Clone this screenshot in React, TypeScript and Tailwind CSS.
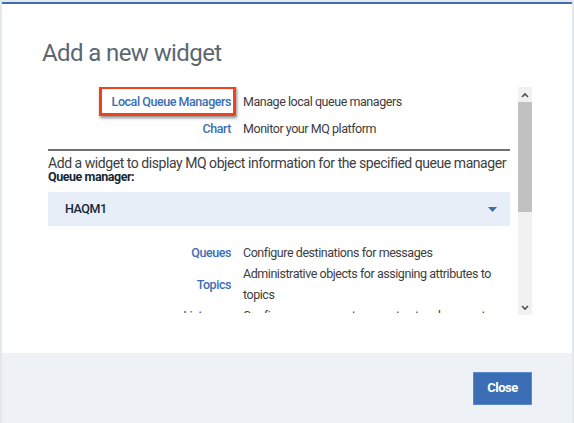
import React from 'react';

const font = { fontFamily: 'Roboto, "Liberation Sans", sans-serif' };

const widgets = [
  { name: 'Local Queue Managers', desc: 'Manage local queue managers', marked: true },
  { name: 'Chart', desc: 'Monitor your MQ platform', marked: false },
];

const objects = [
  { name: 'Queues', desc: 'Configure destinations for messages' },
  { name: 'Topics', desc: 'Administrative objects for assigning attributes to topics' },
  { name: 'Listeners', desc: 'Configure processes to accept network requests' },
];

const Chevron = ({ up }: { up?: boolean }) => (
  <svg width="8" height="6" viewBox="0 0 8 6">
    <path d={up ? 'M1 5 L4 2 L7 5' : 'M1 1 L4 4 L7 1'} stroke="#505050" strokeWidth="1.6" fill="none" />
  </svg>
);

const App: React.FC = () => {
  return (
    <div className="w-[574px] h-[423px] bg-[#e3e8ee] px-[2px] pt-[2px] overflow-hidden tracking-[-0.45px]" style={font}>
      <div className="h-full flex flex-col bg-white border-t-2 border-[#3b6eb4]">
        <div className="flex-1 flex flex-col overflow-hidden">
          <h1 className="pl-[40px] pt-[33px] text-[24px] leading-[32px] tracking-[-0.6px] text-[#5a6872] font-normal">
            Add a new widget
          </h1>
          <div className="mt-[18px] ml-[46px] flex gap-[8px] h-[228px]">
            <div className="w-[462px] h-[226px] overflow-hidden">
              {widgets.map((w, i) => (
                <div key={w.name} className={`flex text-[12.5px] ${i === 0 ? 'h-[30px] pt-[1px]' : 'h-[25px]'}`}>
                  <div className="w-[183px] flex justify-end">
                    <span className="relative flex items-center font-medium text-[#3b6eb4]">
                      {w.name}
                      {w.marked && (
                        <span className="absolute left-[-13px] right-[-5px] top-[-2px] bottom-[1px] border-[3px] border-[#f0401c] shadow-[1px_2px_3px_rgba(0,0,0,0.45)]" />
                      )}
                    </span>
                  </div>
                  <div className="ml-[12px] flex items-center text-[#3d3d3d]">{w.desc}</div>
                </div>
              ))}
              <div className="mt-[7px] h-[2px] bg-[#707070]" />
              <div className="mt-[5px] text-[14px] leading-[14px] text-[#3d3d3d] whitespace-nowrap">
                Add a widget to display MQ object information for the specified queue manager
              </div>
              <div className="text-[12.5px] leading-[14px] font-bold text-[#152935]">Queue manager:</div>
              <div className="mt-[8px] h-[34px] bg-[#e8eef7] flex items-center justify-between pl-[17px] pr-[13px]">
                <span className="text-[12.5px] font-medium text-[#152935]">HAQM1</span>
                <svg width="9" height="5" viewBox="0 0 9 5">
                  <path d="M0 0 H9 L4.5 5 Z" fill="#3b6eb4" />
                </svg>
              </div>
              <div className="mt-[16px]">
                {objects.map((o) => (
                  <div key={o.name} className="flex items-center text-[12.5px] leading-[21px]">
                    <div className="w-[183px] shrink-0 text-right font-medium text-[#3b6eb4]">{o.name}</div>
                    <div className="ml-[12px] w-[262px] text-[#3d3d3d]">{o.desc}</div>
                  </div>
                ))}
              </div>
            </div>
            <div className="w-[14px] flex flex-col bg-[#f1f1f1]">
              <div className="h-[15px] flex items-center justify-center">
                <Chevron up />
              </div>
              <div className="h-[110px] bg-[#c1c1c1]" />
              <div className="flex-1" />
              <div className="h-[15px] flex items-center justify-center">
                <Chevron />
              </div>
            </div>
          </div>
        </div>
        <div className="h-[70px] bg-[#eef1f5] flex items-center justify-end pr-[40px]">
          <button className="w-[59px] h-[33px] bg-[#3b6eb4] border border-[#5b8ad0] text-white text-[13px] font-bold">
            Close
          </button>
        </div>
      </div>
    </div>
  );
};

export default App;
